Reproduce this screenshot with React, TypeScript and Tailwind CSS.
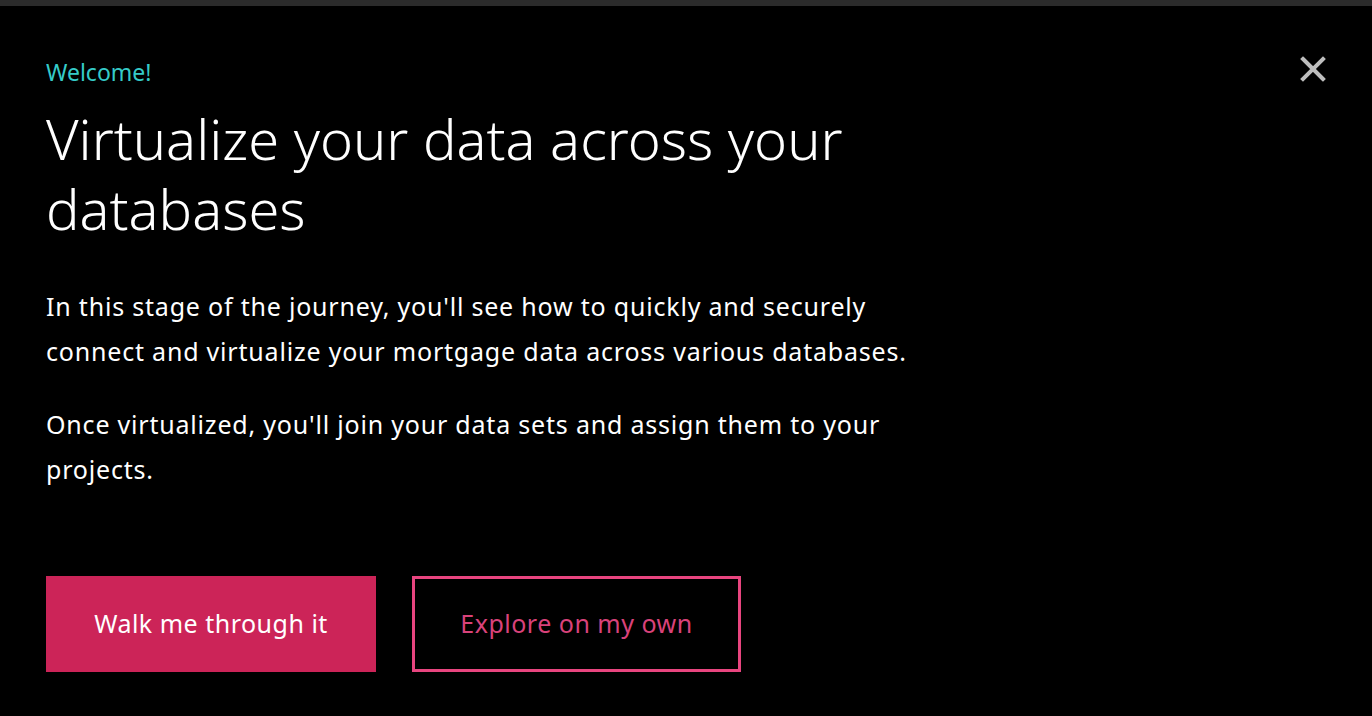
import * as React from "react";

const CloseIcon: React.FC = () => (
  <svg width="26" height="26" viewBox="0 0 26 26" fill="none">
    <path d="M3 3 L23 23 M23 3 L3 23" stroke="#bdbdbd" strokeWidth="4" strokeLinecap="square" />
  </svg>
);

export default function App() {
  return (
    <div className="h-[716px] w-[1372px] overflow-hidden bg-black font-['Noto_Sans',sans-serif]">
      <div className="h-[6px] w-full bg-[#2b2b2b]" />
      <div className="flex">
        <div className="flex-1 pl-[46px] pt-[52px]">
          <p className="text-[23px] leading-[28px] text-[#35cbc8]">Welcome!</p>
          <h1 className="mt-[17px] w-[880px] text-[56px] font-light leading-[70px] text-white">
            Virtualize your data across your databases
          </h1>
          <div className="mt-[41px] w-[885px] text-[25px] leading-[45px] tracking-[0.8px] text-white">
            <p>
              In this stage of the journey, you'll see how to quickly and securely connect and
              virtualize your mortgage data across various databases.
            </p>
            <p className="mt-[28px]">
              Once virtualized, you'll join your data sets and assign them to your projects.
            </p>
          </div>
          <div className="mt-[84px] flex gap-[36px]">
            <button className="h-[96px] w-[330px] bg-[#cc2458] text-[25px] tracking-[0.5px] text-white">
              Walk me through it
            </button>
            <button className="h-[96px] w-[329px] border-[3px] border-[#e8457f] text-[25px] tracking-[0.5px] text-[#d9427a]">
              Explore on my own
            </button>
          </div>
        </div>
        <div className="pr-[46px] pt-[50px]">
          <CloseIcon />
        </div>
      </div>
    </div>
  );
}
